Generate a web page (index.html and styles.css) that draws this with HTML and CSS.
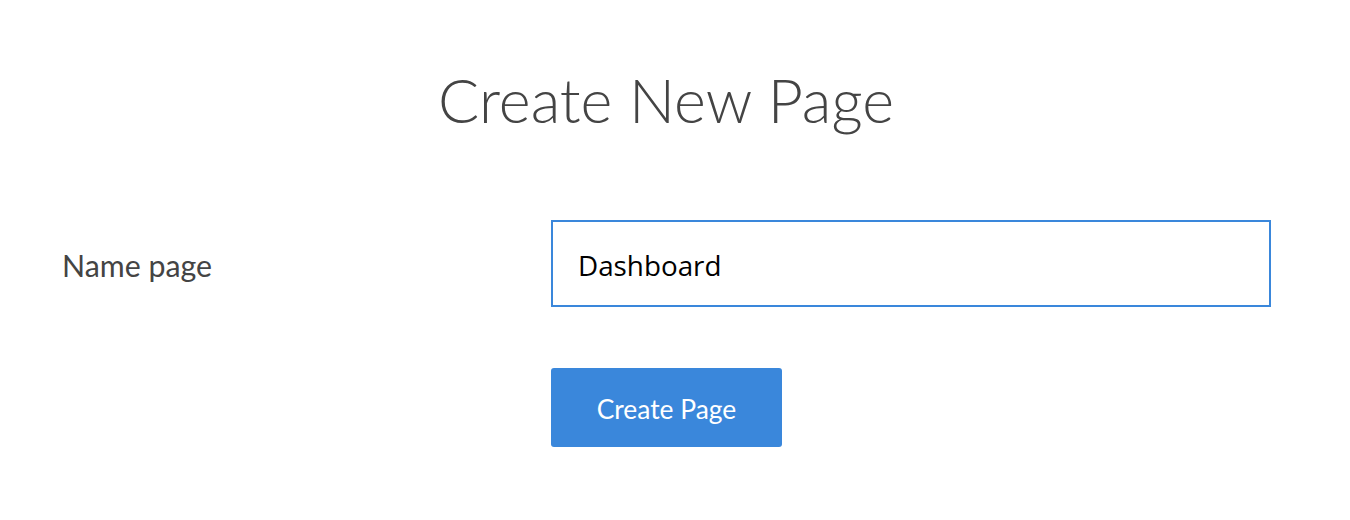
FILE: index.html
```html
<!DOCTYPE html>
<html>
<head>
<meta charset="utf-8">
<link rel="stylesheet" href="styles.css">
</head>
<body>
<main class="page">
  <h1 class="title">Create New Page</h1>
  <form class="form">
    <label class="label" for="name">Name page</label>
    <input class="input" id="name" type="text" value="Dashboard">
    <div class="actions">
      <button class="btn" type="button">Create Page</button>
    </div>
  </form>
</main>
</body>
</html>
```
FILE: styles.css
```css
html, body {
  margin: 0;
  padding: 0;
  background: #ffffff;
}
.page {
  width: 1350px;
  height: 520px;
  box-sizing: border-box;
  padding: 64px 0 0 62px;
  font-family: Lato, "Liberation Sans", sans-serif;
}
.title {
  margin: 0;
  width: 1208px;
  text-align: center;
  font-weight: 300;
  font-size: 61px;
  line-height: 72px;
  color: #444444;
}
.form {
  margin-top: 84px;
  display: grid;
  grid-template-columns: 489px 720px;
  row-gap: 61px;
  align-items: center;
}
.label {
  font-size: 30.3px;
  color: #444444;
  padding-top: 3px;
}
.input {
  box-sizing: border-box;
  width: 720px;
  height: 87px;
  border: 2px solid #3a87db;
  border-radius: 0;
  padding: 2px 25px 0;
  font-family: "Open Sans", sans-serif;
  font-size: 27.8px;
  color: #000;
  outline: none;
  background: #fff;
}
.actions {
  grid-column: 2;
}
.btn {
  width: 231px;
  height: 79px;
  border: none;
  border-radius: 3px;
  background: #3a87db;
  color: #fff;
  font-family: Lato, sans-serif;
  font-size: 26.4px;
  padding: 2px 0 0;
}
```
